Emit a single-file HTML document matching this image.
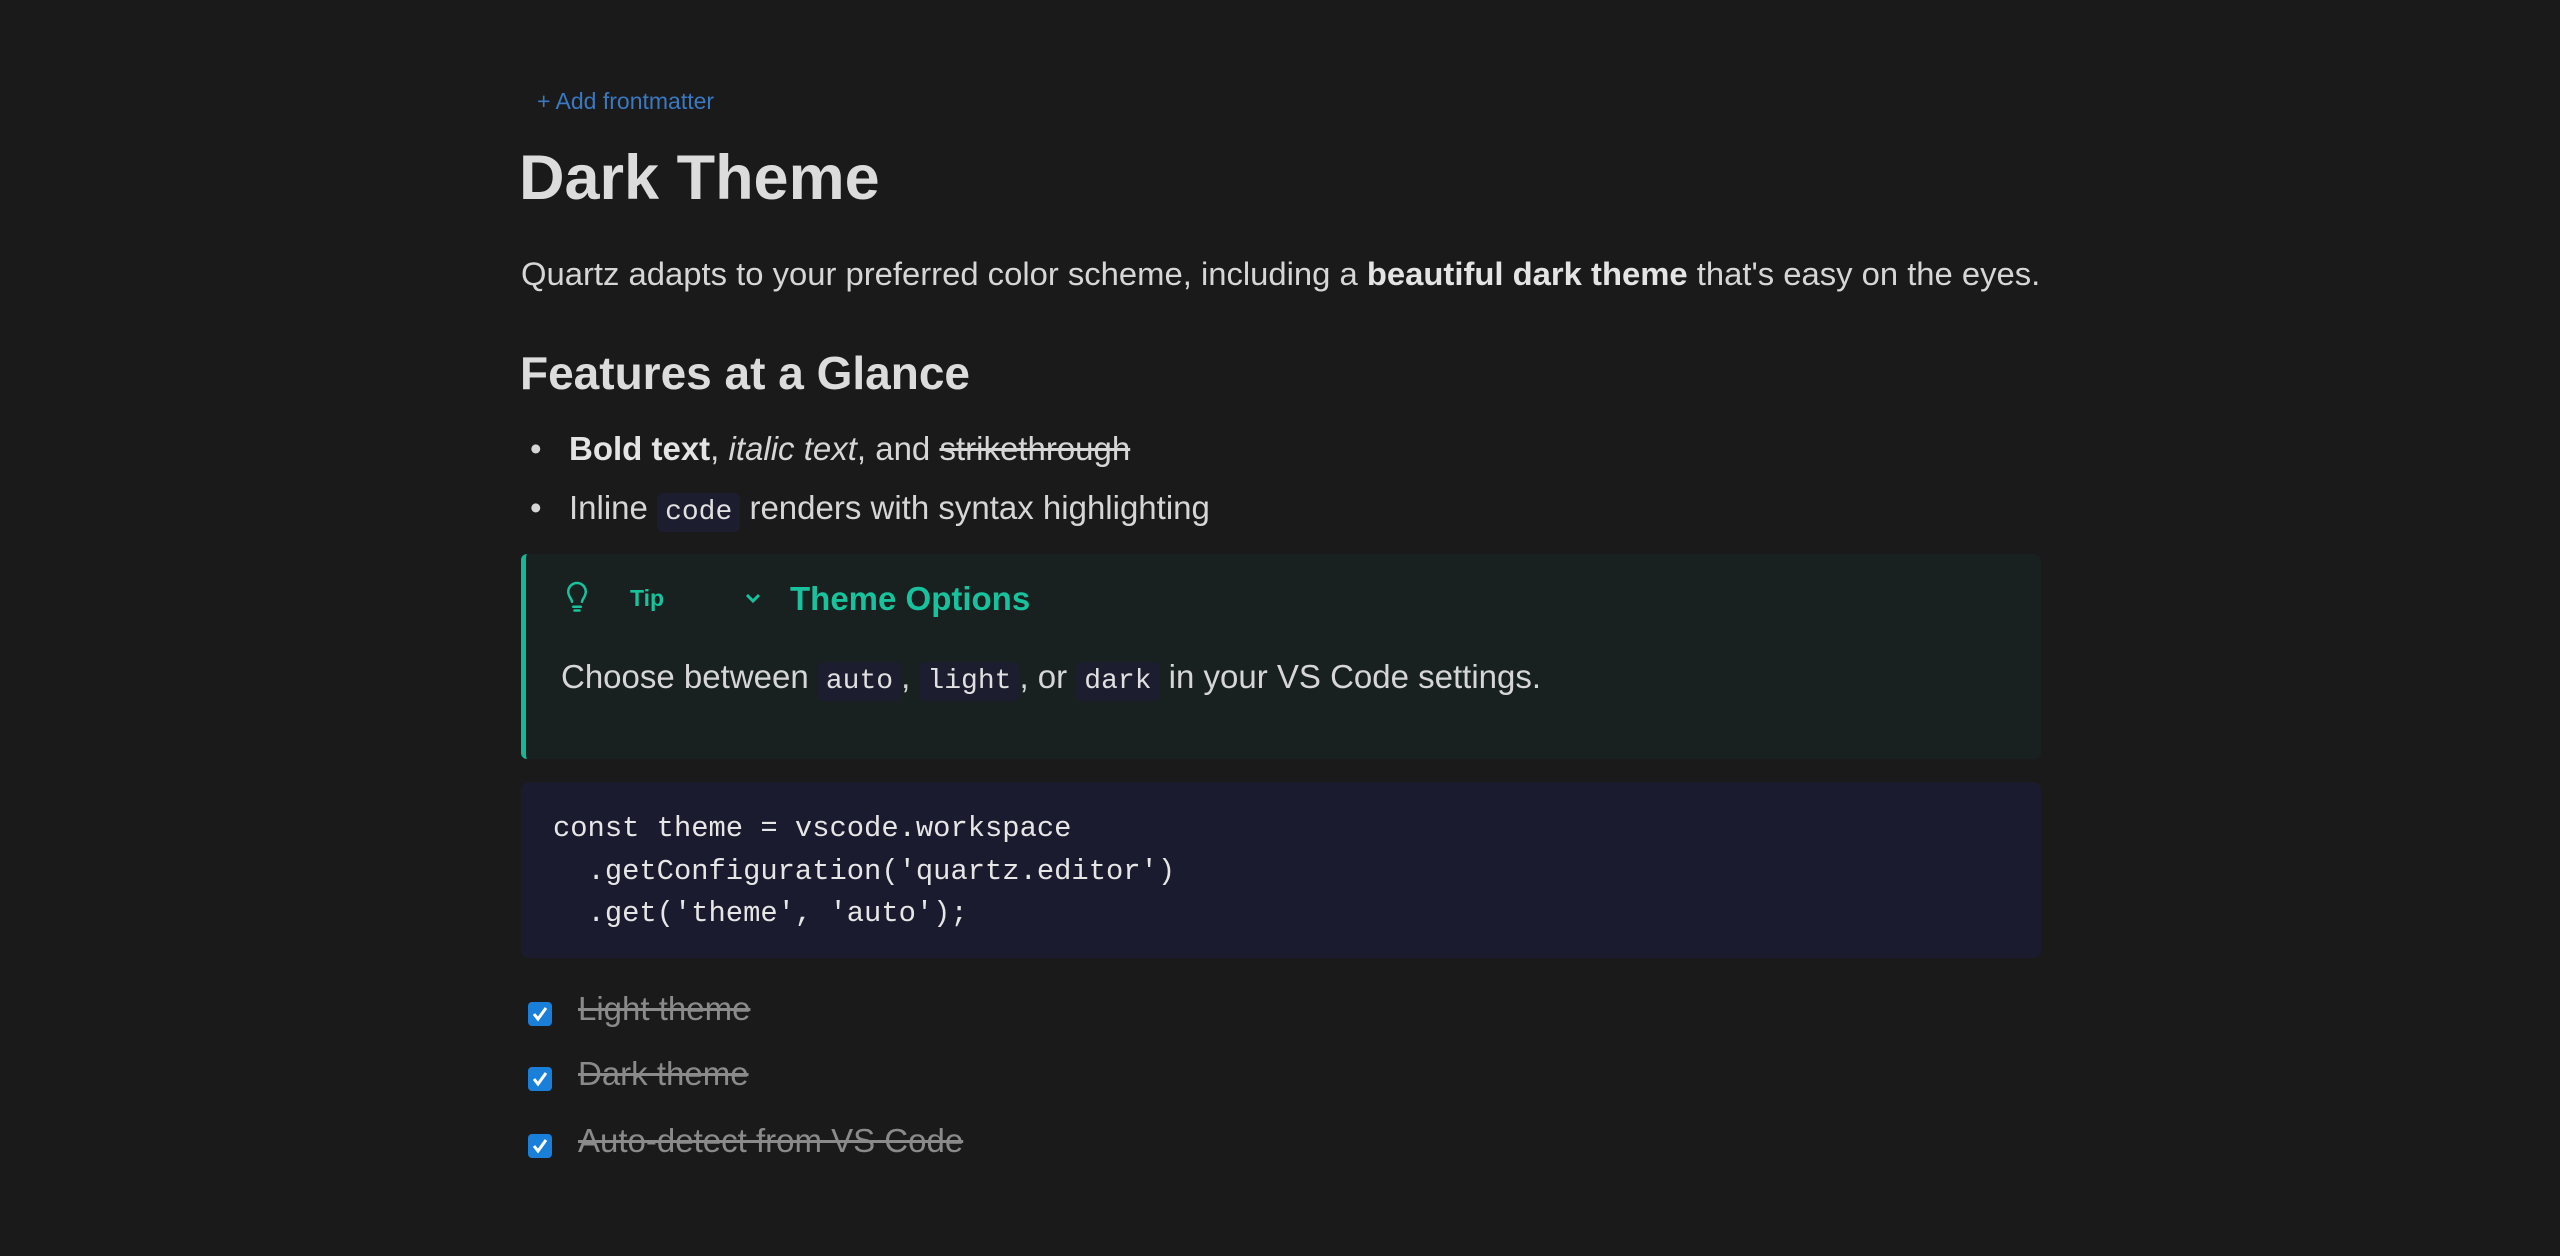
<!DOCTYPE html>
<html><head><meta charset="utf-8"><style>
html,body{margin:0;padding:0;background:#1a1a1a;width:2560px;height:1256px;overflow:hidden;font-family:"Liberation Sans",sans-serif;color:#d6d6d6}
.a{position:absolute;white-space:nowrap}
code{font-family:"Liberation Mono",monospace;background:#1d1d30;border-radius:6px;padding:4px 8px;font-size:28px;color:#e0e0e0}
.cb{position:absolute;left:528px;width:24px;height:24px;background:#1a7fd8;border-radius:4px}
.cb svg{position:absolute;left:3px;top:3px}
.done{position:absolute;left:578px;font-size:33px;color:#8a8a8a;text-decoration:line-through}
</style></head><body>
<div class="a" style="left:537px;top:88px;font-size:23px;color:#3a78c2">+ Add frontmatter</div>
<div class="a" style="left:519px;top:142px;font-size:63px;font-weight:bold;color:#dcdcdc">Dark Theme</div>
<div class="a" style="left:521px;top:255px;font-size:32.8px">Quartz adapts to your preferred color scheme, including a <b style="color:#e4e4e4">beautiful dark theme</b> that's easy on the eyes.</div>
<div class="a" style="left:520px;top:346px;font-size:46px;font-weight:bold;color:#dcdcdc">Features at a Glance</div>
<div class="a" style="left:530px;top:430px;font-size:33px">•</div>
<div class="a" style="left:569px;top:430px;font-size:33px"><b style="color:#e4e4e4">Bold text</b>, <i>italic text</i>, and <s>strikethrough</s></div>
<div class="a" style="left:530px;top:489px;font-size:33px">•</div>
<div class="a" style="left:569px;top:489px;font-size:33px">Inline <code>code</code> renders with syntax highlighting</div>
<div class="a" style="left:521px;top:554px;width:1520px;height:205px;background:#182120;border-radius:6px;border-left:5px solid #17b795;box-sizing:border-box"></div>
<svg class="a" style="left:562px;top:580px" width="30" height="36" viewBox="0 0 24 28" fill="none" stroke="#17c29c" stroke-width="2" stroke-linecap="round"><path d="M8 17c0-2-3-4-3-8a7 7 0 0 1 14 0c0 4-3 6-3 8"/><path d="M9 21h6M10 24h4"/></svg>
<div class="a" style="left:630px;top:585px;font-size:23px;font-weight:bold;color:#17c29c">Tip</div>
<svg class="a" style="left:744px;top:592px" width="18" height="14" viewBox="0 0 18 14"><path d="M3 3l6 6 6-6" stroke="#17c29c" stroke-width="3" fill="none"/></svg>
<div class="a" style="left:790px;top:580px;font-size:33px;font-weight:bold;color:#17c29c">Theme Options</div>
<div class="a" style="left:561px;top:658px;font-size:33px">Choose between <code>auto</code>, <code>light</code>, or <code>dark</code> in your VS Code settings.</div>
<div class="a" style="left:521px;top:782px;width:1520px;height:176px;background:#1b1b2f;border-radius:8px"></div>
<pre class="a" style="left:553px;top:808px;margin:0;white-space:pre;font-family:'Liberation Mono',monospace;font-size:28.8px;line-height:42.5px;color:#e6e6e6">const theme = vscode.workspace
  .getConfiguration('quartz.editor')
  .get('theme', 'auto');</pre>
<div class="cb" style="top:1002px"><svg width="18" height="18" viewBox="0 0 18 18"><path d="M3 9l4 5 8-11" stroke="#fff" stroke-width="3" fill="none"/></svg></div>
<div class="done" style="top:990px">Light theme</div>
<div class="cb" style="top:1067px"><svg width="18" height="18" viewBox="0 0 18 18"><path d="M3 9l4 5 8-11" stroke="#fff" stroke-width="3" fill="none"/></svg></div>
<div class="done" style="top:1055px">Dark theme</div>
<div class="cb" style="top:1134px"><svg width="18" height="18" viewBox="0 0 18 18"><path d="M3 9l4 5 8-11" stroke="#fff" stroke-width="3" fill="none"/></svg></div>
<div class="done" style="top:1122px">Auto-detect from VS Code</div>
</body></html>
